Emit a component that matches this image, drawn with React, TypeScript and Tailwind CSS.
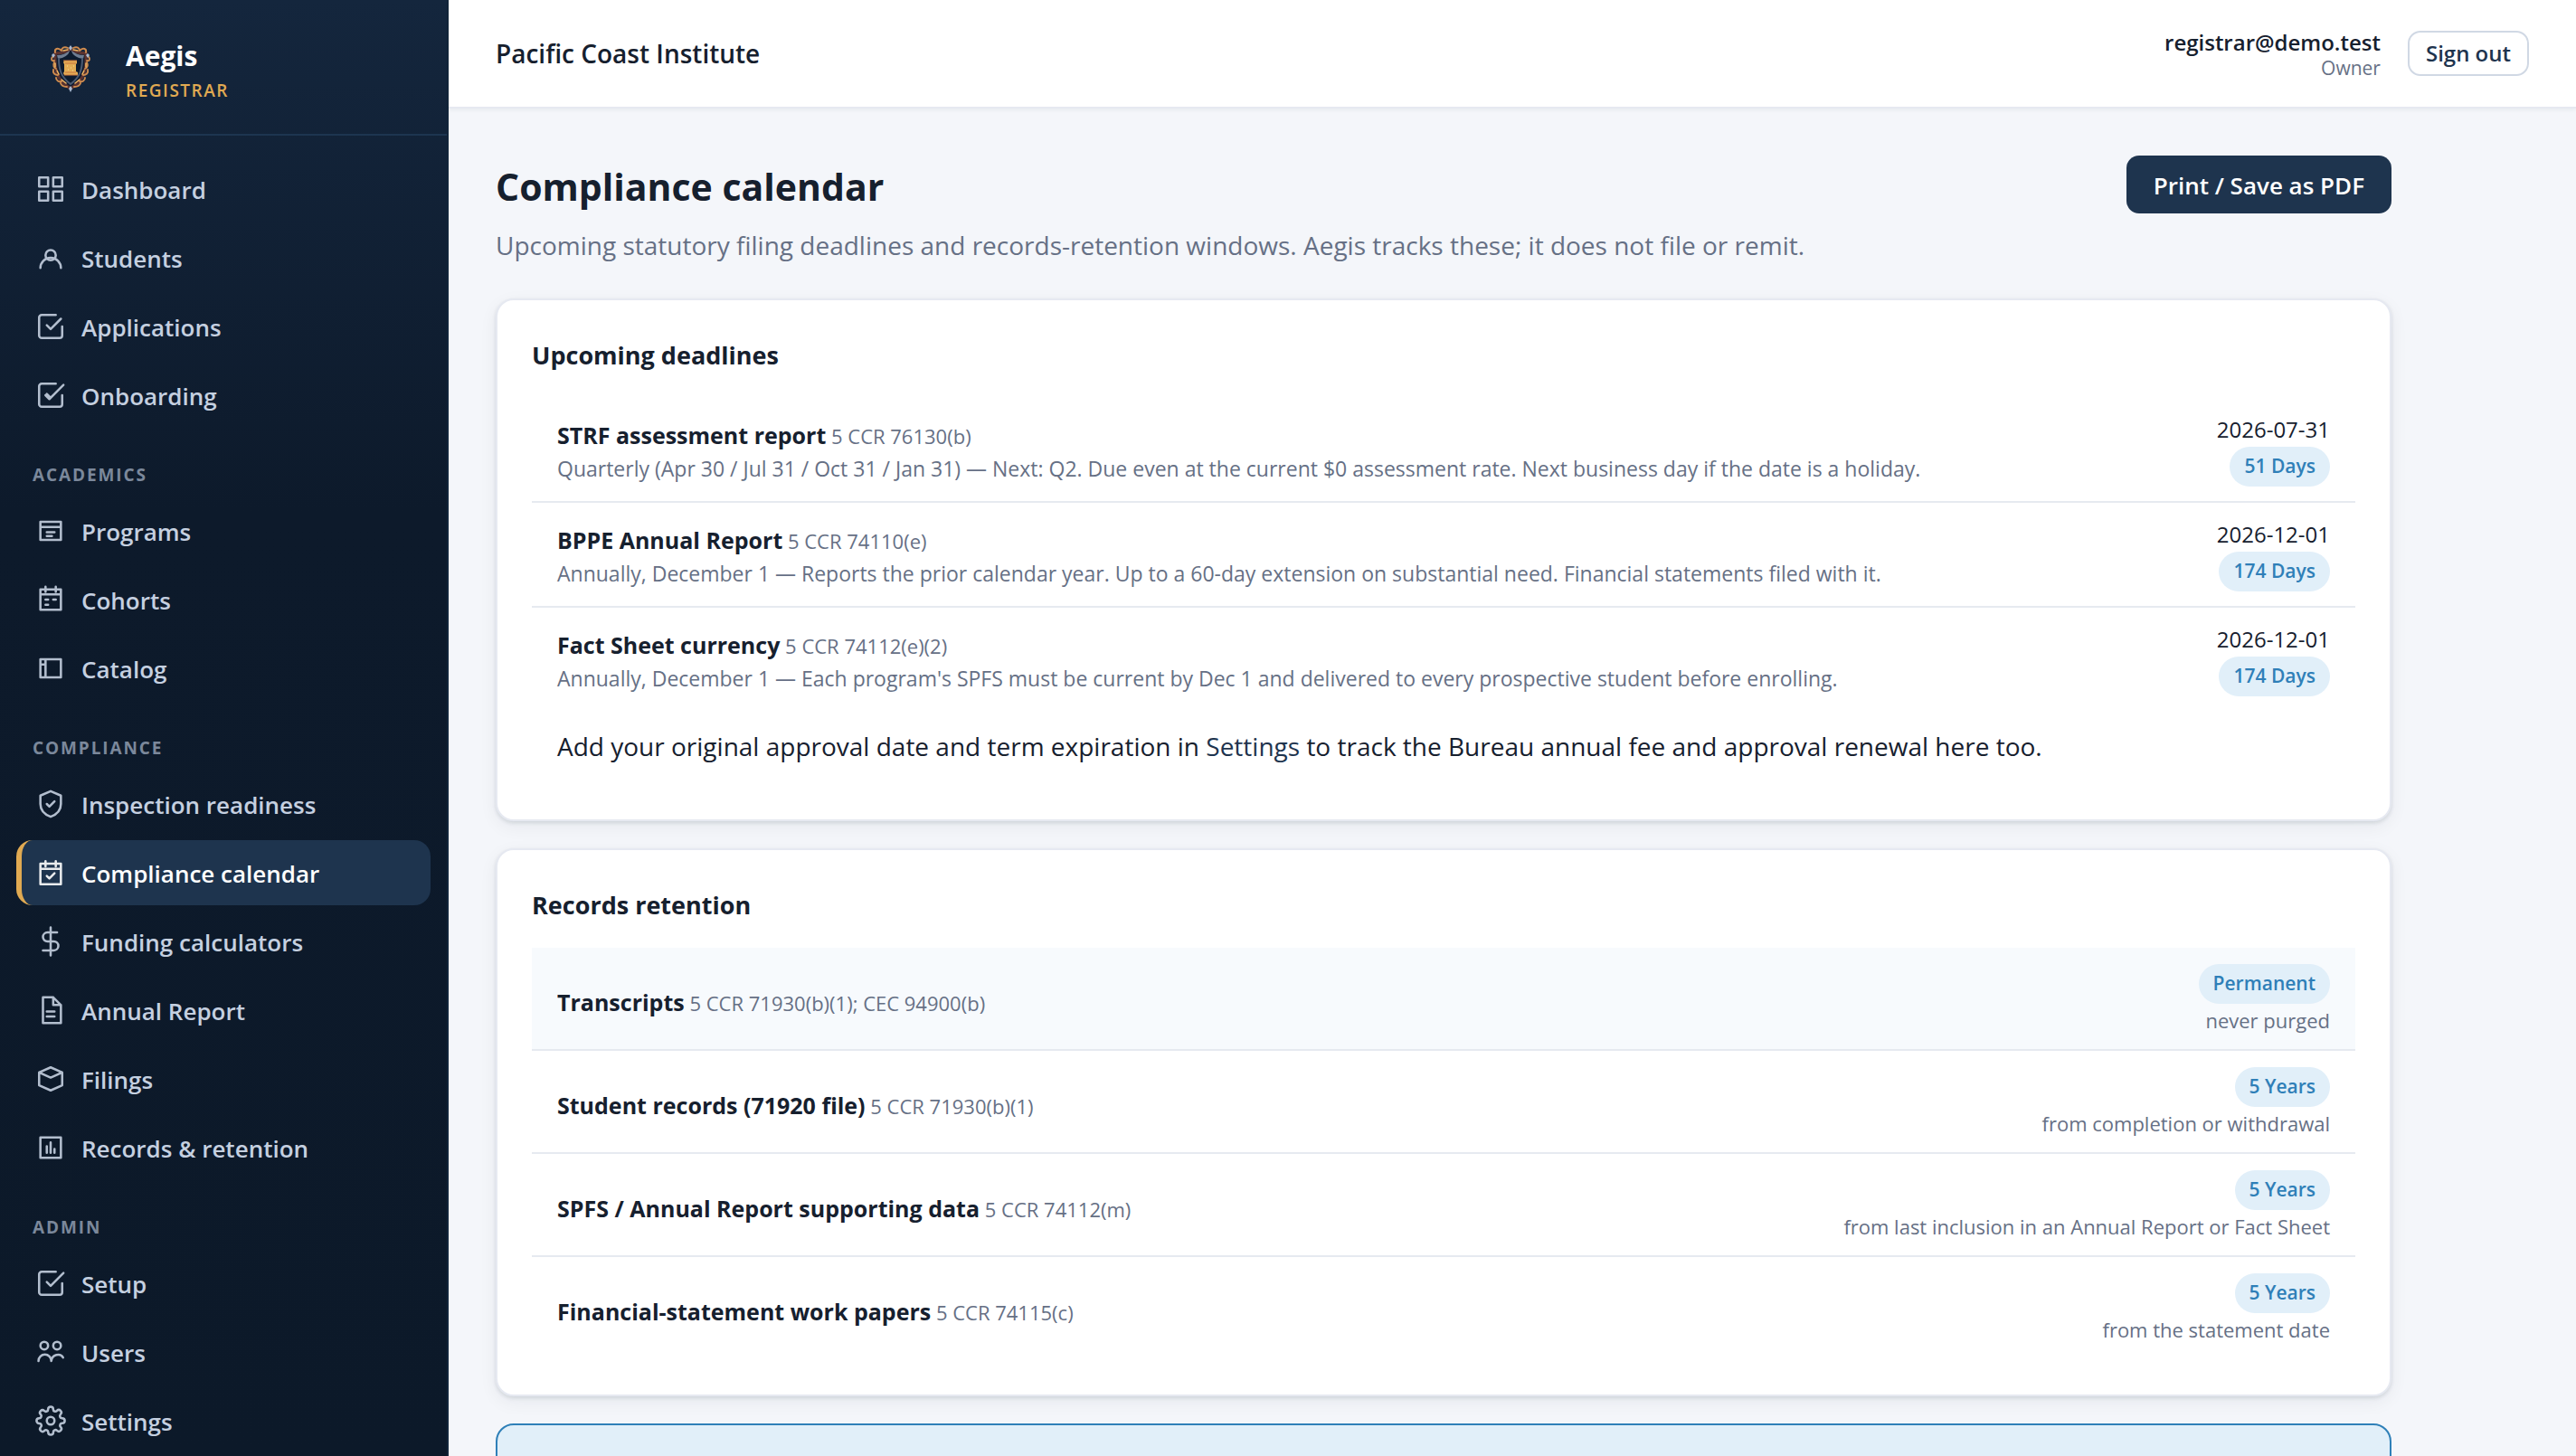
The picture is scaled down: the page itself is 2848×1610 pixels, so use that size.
import type { ReactNode } from "react";

type NavItem = { label: string; icon: ReactNode; active?: boolean };
type NavGroup = { title?: string; items: NavItem[] };

function Icon({ children }: { children: ReactNode }) {
  return (
    <svg
      viewBox="0 0 24 24"
      className="size-[34px] shrink-0 opacity-90"
      fill="none"
      stroke="currentColor"
      strokeWidth="1.8"
      strokeLinecap="round"
      strokeLinejoin="round"
      aria-hidden="true"
    >
      {children}
    </svg>
  );
}

const openBox = "M21 12v7a2 2 0 0 1-2 2H5a2 2 0 0 1-2-2V5a2 2 0 0 1 2-2h11";

const navGroups: NavGroup[] = [
  {
    items: [
      {
        label: "Dashboard",
        icon: <path d="M3 3h7v7H3zM14 3h7v7h-7zM3 14h7v7H3zM14 14h7v7h-7z" />,
      },
      {
        label: "Students",
        icon: (
          <>
            <circle cx="12" cy="10" r="4" />
            <path d="M4 20a8 8 0 0 1 16 0" />
          </>
        ),
      },
      { label: "Applications", icon: <path d={openBox + "M9 11l3 3 8-8"} /> },
      { label: "Onboarding", icon: <path d={openBox + "M9 11l3 3L22 4M8 12l3 3 4-4"} /> },
    ],
  },
  {
    title: "Academics",
    items: [
      { label: "Programs", icon: <path d="M4 5h16v14H4zM4 9h16M9 13h6M9 16h4" /> },
      {
        label: "Cohorts",
        icon: <path d="M4 4h16v16H4zM8 2v4M16 2v4M4 8h16M8 12h2M14 12h2M8 16h2" />,
      },
      { label: "Catalog", icon: <path d="M4 5h16v14H4zM8 5v14M4 9h4" /> },
    ],
  },
  {
    title: "Compliance",
    items: [
      {
        label: "Inspection readiness",
        icon: (
          <path d="M12 2l8 3.5V12c0 4.8-3.2 8.2-8 10-4.8-1.8-8-5.2-8-10V5.5L12 2zM9 12l2 2 4-4" />
        ),
      },
      {
        label: "Compliance calendar",
        active: true,
        icon: <path d="M4 5h16v16H4zM8 3v4M16 3v4M4 9h16M9 14.5l2 2 4-4" />,
      },
      {
        label: "Funding calculators",
        icon: <path d="M12 1v22M17 5H9.5a3.5 3.5 0 0 0 0 7h5a3.5 3.5 0 0 1 0 7H6" />,
      },
      { label: "Annual Report", icon: <path d="M14 2H6v20h14V8zM14 2v6h6M9 13h6M9 17h6" /> },
      { label: "Filings", icon: <path d="M12 3l9 4v10l-9 4-9-4V7zM3 7l9 4 9-4" /> },
      {
        label: "Records & retention",
        icon: <path d="M4 4h16v16H4zM9 16v-5M12 16V8M15 16v-3" />,
      },
    ],
  },
  {
    title: "Admin",
    items: [
      { label: "Setup", icon: <path d={openBox + "M9 11l3 3L22 4"} /> },
      {
        label: "Users",
        icon: (
          <>
            <circle cx="7" cy="7" r="3" />
            <circle cx="17" cy="7" r="3" />
            <path d="M2.500 19a5 5 0 0 1 10 0c.5-5 7-6.500 9.200-2.700" />
          </>
        ),
      },
      {
        label: "Settings",
        icon: (
          <>
            <circle cx="12" cy="12" r="3" />
            <path d="M19.4 15a1.65 1.65 0 0 0 .33 1.82l.06.06a2 2 0 0 1-2.83 2.83l-.06-.06a1.65 1.65 0 0 0-1.82-.33 1.65 1.65 0 0 0-1 1.51V21a2 2 0 0 1-4 0v-.09A1.65 1.65 0 0 0 9 19.4a1.65 1.65 0 0 0-1.82.33l-.06.06a2 2 0 0 1-2.83-2.83l.06-.06a1.65 1.65 0 0 0 .33-1.82 1.65 1.65 0 0 0-1.51-1H3a2 2 0 0 1 0-4h.09A1.65 1.65 0 0 0 4.6 9a1.65 1.65 0 0 0-.33-1.82l-.06-.06a2 2 0 0 1 2.83-2.83l.06.06a1.65 1.65 0 0 0 1.82.33H9a1.65 1.65 0 0 0 1-1.51V3a2 2 0 0 1 4 0v.09a1.65 1.65 0 0 0 1 1.51 1.65 1.65 0 0 0 1.82-.33l.06-.06a2 2 0 0 1 2.83 2.83l-.06.06a1.65 1.65 0 0 0-.33 1.82V9a1.65 1.65 0 0 0 1.51 1H21a2 2 0 0 1 0 4h-.09a1.65 1.65 0 0 0-1.51 1z" />
          </>
        ),
      },
    ],
  },
];

const deadlines = [
  {
    title: "STRF assessment report",
    cite: "5 CCR 76130(b)",
    note: "Quarterly (Apr 30 / Jul 31 / Oct 31 / Jan 31) — Next: Q2. Due even at the current $0 assessment rate. Next business day if the date is a holiday.",
    date: "2026-07-31",
    left: "51 Days",
  },
  {
    title: "BPPE Annual Report",
    cite: "5 CCR 74110(e)",
    note: "Annually, December 1 — Reports the prior calendar year. Up to a 60-day extension on substantial need. Financial statements filed with it.",
    date: "2026-12-01",
    left: "174 Days",
  },
  {
    title: "Fact Sheet currency",
    cite: "5 CCR 74112(e)(2)",
    note: "Annually, December 1 — Each program's SPFS must be current by Dec 1 and delivered to every prospective student before enrolling.",
    date: "2026-12-01",
    left: "174 Days",
  },
];

const retention = [
  {
    title: "Transcripts",
    cite: "5 CCR 71930(b)(1); CEC 94900(b)",
    period: "Permanent",
    from: "never purged",
    highlight: true,
  },
  {
    title: "Student records (71920 file)",
    cite: "5 CCR 71930(b)(1)",
    period: "5 Years",
    from: "from completion or withdrawal",
  },
  {
    title: "SPFS / Annual Report supporting data",
    cite: "5 CCR 74112(m)",
    period: "5 Years",
    from: "from last inclusion in an Annual Report or Fact Sheet",
  },
  {
    title: "Financial-statement work papers",
    cite: "5 CCR 74115(c)",
    period: "5 Years",
    from: "from the statement date",
  },
];

function Crest() {
  return (
    <svg viewBox="0 0 46 52" className="h-[52px] w-[46px]" fill="none" aria-hidden="true">
      <path
        d="M23 4c5 4 10 5 17 5 1 14 0 29-17 39C6 38 5 23 6 9c7 0 12-1 17-5z"
        fill="#0d1b2f"
        stroke="#5a3230"
        strokeWidth="3.5"
      />
      <path
        d="M8 11c6 0 10-2 14-5-1 5-6 8-13 9zM38 11c-6 0-10-2-14-5 1 5 6 8 13 9z"
        fill="#6f7d92"
      />
      <path d="M10 14c0 12 2 21 13 29 11-8 13-17 13-29" stroke="#4c5b73" strokeWidth="2" />
      <path
        d="M20 3c-4-2-7 0-7 3M26 3c4-2 7 0 7 3M13 6C9 2 5 4 6 8M33 6c4-4 8-2 7 2M3 13c-2 2-1 5 2 4M43 13c2 2 1 5-2 4M5 19c-2 4 0 6 2 7M41 19c2 4 0 6-2 7M4 27c-1 4 2 6 5 6M42 27c1 4-2 6-5 6M7 36c0 3 3 5 6 4M39 36c0 3-3 5-6 4M12 42c1 3 4 4 7 4M34 42c-1 3-4 4-7 4"
        stroke="#cf8b4e"
        strokeWidth="1.9"
        strokeLinecap="round"
      />
      <path
        d="M15 6l5-1M31 6l-5-1M6 20v4M40 20v4M8 28l2 4M38 28l-2 4M13 38l5 4M33 38l-5 4"
        stroke="#edb565"
        strokeWidth="1.6"
        strokeLinecap="round"
      />
      <path
        d="M23 0l2 3-2 3-2-3zM4 9l2 2-2 3-2-3zM42 9l2 2-2 3-2-3zM23 45l2 3-2 4-2-4z"
        fill="#a9bbd2"
      />
      <path d="M16 17h14v3l-1 1v8l2 1v3H16l-1-2 1-2v-8l-1-2z" fill="#e3ad55" />
      <path d="M15 17h15M16 33h15M17 20h12M17 30h12" stroke="#c9743f" strokeWidth="1.2" />
      <path d="M19 23h1M23 25h1M26 23h1M20 27h1M25 28h1" stroke="#f7dc9a" strokeWidth="1.2" />
    </svg>
  );
}

function Sidebar() {
  return (
    <aside className="w-[496px] shrink-0 overflow-hidden border-r-2 border-[#12253a] bg-linear-to-b from-[#14263d] via-[#0d1a2b] via-35% to-[#0c1929]">
      <div className="flex h-[150px] items-center gap-[38px] border-b-2 border-[#1d3550] pt-1 pl-[55px]">
        <Crest />
        <div className="pt-[10px]">
          <div className="text-[30px] leading-[38px] font-bold text-white">Aegis</div>
          <div className="text-[19px] leading-[38px] font-semibold tracking-[0.08em] text-[#e0aa52] uppercase">
            Registrar
          </div>
        </div>
      </div>
      <nav className="px-[18px] pt-[23px]">
        {navGroups.map((group, i) => (
          <section key={i}>
            {group.title && (
              <h2 className="px-[18px] pt-[39px] pb-3 text-[19px] leading-[27px] font-bold tracking-[0.1em] text-[#7b889b] uppercase">
                {group.title}
              </h2>
            )}
            <ul className="flex flex-col gap-1">
              {group.items.map((item) => (
                <li key={item.label}>
                  <a
                    href="#"
                    aria-current={item.active ? "page" : undefined}
                    className={
                      item.active
                        ? "flex h-[72px] items-center gap-[17px] rounded-[18px] border-l-6 border-[#e0aa52] bg-[#1e344e] pl-[15px] text-[26px] font-semibold text-white"
                        : "flex h-[72px] items-center gap-[17px] rounded-[18px] border-l-6 border-transparent pl-[15px] text-[26px] font-semibold text-[#c5d0e0]"
                    }
                  >
                    <Icon>{item.icon}</Icon>
                    <span className="pt-0.5">{item.label}</span>
                  </a>
                </li>
              ))}
            </ul>
          </section>
        ))}
      </nav>
    </aside>
  );
}

function Pill({ children }: { children: ReactNode }) {
  return (
    <span className="flex h-[44px] items-center rounded-full bg-[#e1eff9] px-4 text-[21px] font-semibold text-[#2f7fb8]">
      {children}
    </span>
  );
}

function Card({ title, children }: { title: string; children: ReactNode }) {
  return (
    <section className="rounded-[20px] border-2 border-[#e6e9f1] bg-white p-[38px] shadow-[0_2px_4px_rgba(16,32,48,0.12),0_6px_20px_rgba(16,32,48,0.06)]">
      <h2 className="mb-6 text-[27px] leading-[46px] font-bold">{title}</h2>
      {children}
    </section>
  );
}

export default function App() {
  return (
    <div className="flex h-screen overflow-hidden bg-[#f4f6fa] font-['Open_Sans',sans-serif] text-[#16202e]">
      <Sidebar />
      <div className="min-w-0 flex-1">
        <header className="flex h-[120px] items-center justify-between border-b-2 border-[#e6e9f1] bg-white px-[52px] shadow-[0_2px_4px_rgba(16,32,48,0.05)]">
          <div className="text-[28px] font-semibold">Pacific Coast Institute</div>
          <div className="flex items-center gap-[30px]">
            <div className="pt-1 text-right">
              <div className="text-[24px] leading-[28px] font-semibold">registrar@demo.test</div>
              <div className="text-[21px] leading-[28px] text-[#667085]">Owner</div>
            </div>
            <button className="h-[50px] rounded-[14px] border-2 border-[#d0d8e4] px-[18px] text-[24px] font-semibold text-[#1e344e]">
              Sign out
            </button>
          </div>
        </header>

        <main className="max-w-[2200px] p-[52px]">
          <div className="mb-9 flex items-start justify-between">
            <div>
              <h1 className="text-[41px] leading-[68px] font-bold">Compliance calendar</h1>
              <p className="mt-2 text-[28px] leading-[46px] text-[#667085]">
                Upcoming statutory filing deadlines and records-retention windows. Aegis tracks these; it does not
                file or remit.
              </p>
            </div>
            <button className="h-[64px] rounded-[14px] bg-[#1e344e] px-[30px] pt-0.5 text-[26px] font-semibold text-white">
              Print / Save as PDF
            </button>
          </div>

          <div className="flex flex-col gap-[30px]">
            <Card title="Upcoming deadlines">
              <ul>
                {deadlines.map((d) => (
                  <li
                    key={d.title}
                    className="flex items-center justify-between border-b-2 border-[#e6eaf0] px-7 py-4 last:border-transparent"
                  >
                    <div className="pt-1">
                      <div className="text-[22px] leading-[36px]">
                        <strong className="text-[25px] font-bold">{d.title}</strong>{" "}
                        <span className="text-[#667085]">{d.cite}</span>
                      </div>
                      <p className="text-[23px] leading-[36px] text-[#667085]">{d.note}</p>
                    </div>
                    <div className="flex flex-col items-end">
                      <time className="text-[24px] leading-[38px]">{d.date}</time>
                      <Pill>{d.left}</Pill>
                    </div>
                  </li>
                ))}
              </ul>
              <p className="px-7 pt-[14px] pb-5 text-[28px] leading-[46px]">
                Add your original approval date and term expiration in{" "}
                <a href="#" className="text-[#1e344e]">
                  Settings
                </a>{" "}
                to track the Bureau annual fee and approval renewal here too.
              </p>
            </Card>

            <Card title="Records retention">
              <ul>
                {retention.map((r) => (
                  <li
                    key={r.title}
                    className={
                      r.highlight
                        ? "flex items-center justify-between border-b-2 border-[#e6eaf0] bg-[#f7fafd] px-7 pt-[18px] pb-[14px]"
                        : "flex items-center justify-between border-b-2 border-[#e6eaf0] px-7 pt-[18px] pb-[14px] last:border-transparent"
                    }
                  >
                    <div className="pt-1 text-[22px] leading-[36px]">
                      <strong className="text-[25px] font-bold">{r.title}</strong>{" "}
                      <span className="text-[#667085]">{r.cite}</span>
                    </div>
                    <div className="flex flex-col items-end">
                      <Pill>{r.period}</Pill>
                      <span className="text-[22px] leading-[36px] text-[#667085]">{r.from}</span>
                    </div>
                  </li>
                ))}
              </ul>
            </Card>

            <section className="h-[200px] rounded-[20px] border-2 border-[#2f80b8] bg-[#e1eff9]" />
          </div>
        </main>
      </div>
    </div>
  );
}
